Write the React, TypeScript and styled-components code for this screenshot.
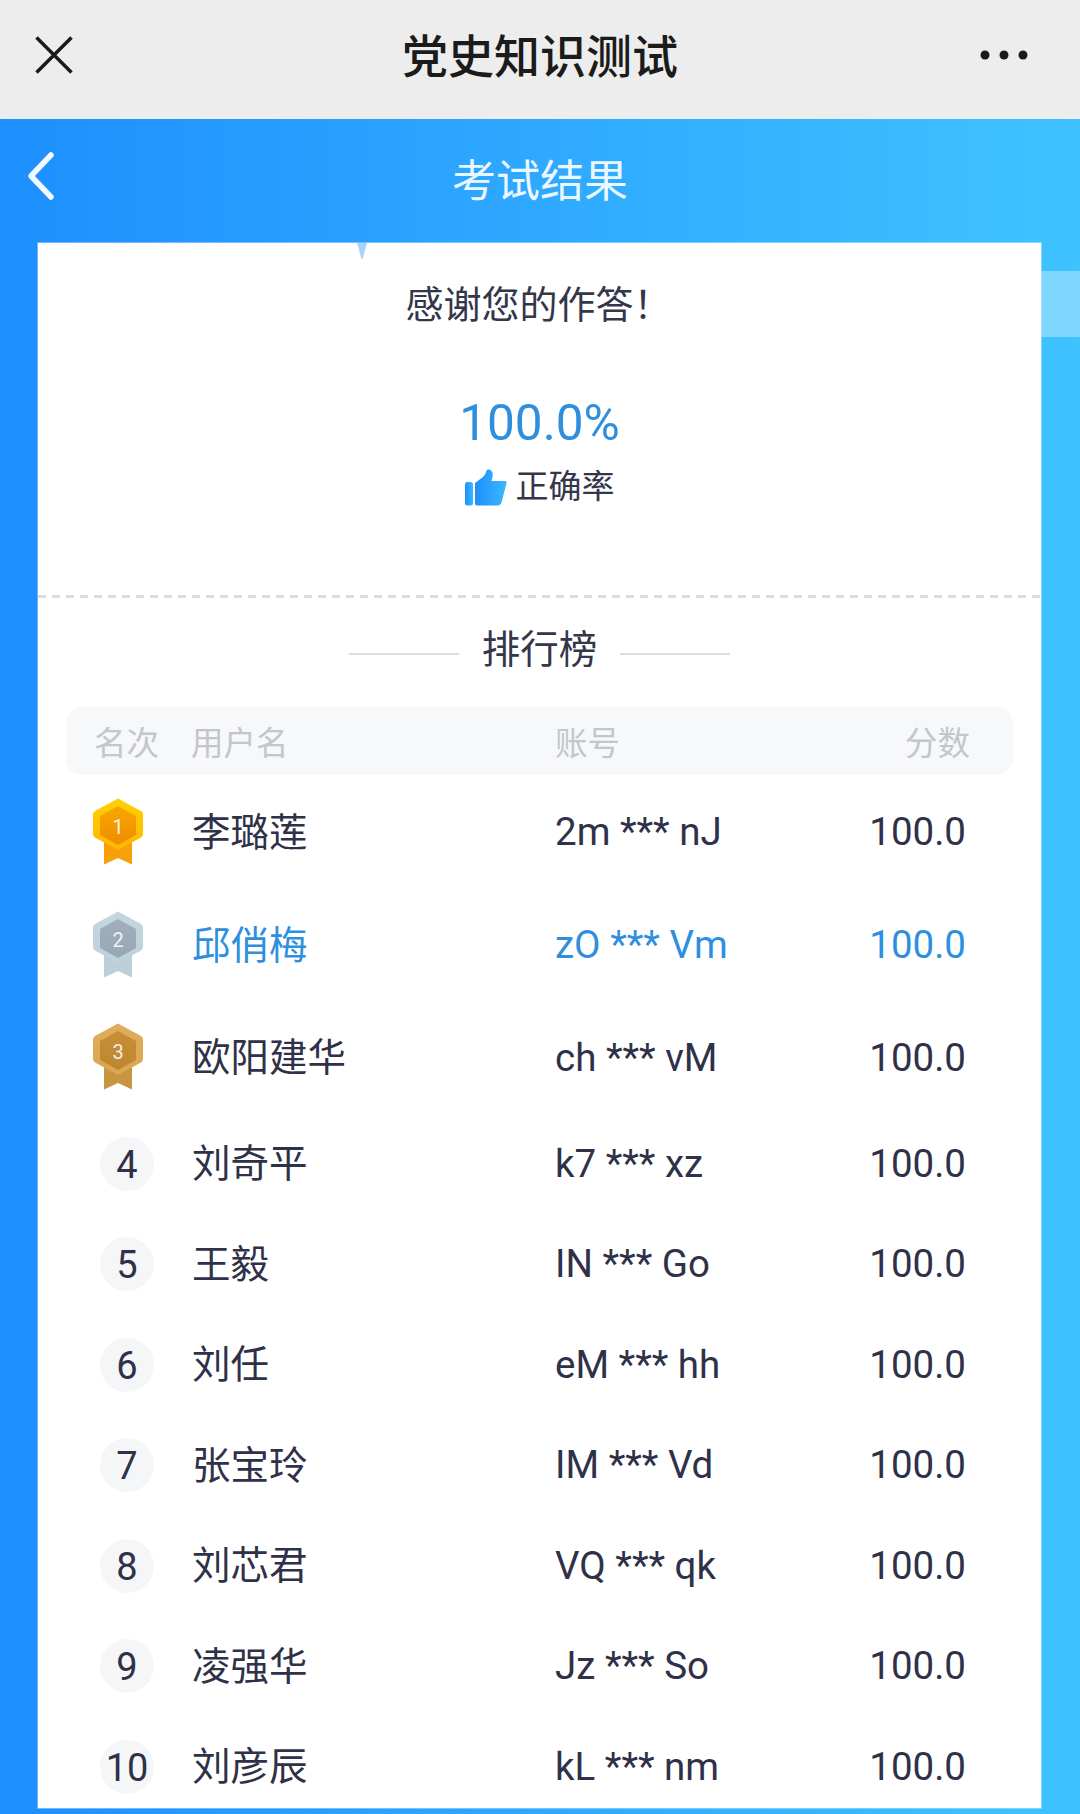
import React from "react";
import styled, { createGlobalStyle } from "styled-components";

const Global = createGlobalStyle`
  html, body { margin: 0; padding: 0; background: #fff; }
  body { font-family: Roboto, "Noto Sans CJK SC", sans-serif; }
  * { box-sizing: border-box; }
`;

const Page = styled.div`
  width: 1080px;
  height: 1814px;
  overflow: hidden;
  display: flex;
  flex-direction: column;
`;

const TopBar = styled.header`
  height: 119px;
  flex: none;
  background: #ededed;
  display: flex;
  align-items: center;
  justify-content: space-between;
  padding: 0 52px 9px 35px;
  position: relative;
`;

const TopTitle = styled.h1`
  position: absolute;
  left: 0;
  right: 0;
  top: 25px;
  margin: 0;
  text-align: center;
  font-size: 46px;
  line-height: 64px;
  font-weight: 500;
  color: #1b1b1b;
`;

const Stage = styled.main`
  flex: 1;
  position: relative;
  background: linear-gradient(90deg, #1e8fff 0%, #3fc3ff 100%);
  display: flex;
  flex-direction: column;
`;

const NavBar = styled.div`
  height: 124px;
  flex: none;
  position: relative;
  display: flex;
  align-items: center;
  justify-content: center;
  padding-top: 2px;
`;

const NavTitle = styled.h2`
  margin: 0;
  font-size: 44px;
  line-height: 60px;
  font-weight: 400;
  color: #eaf7ff;
`;

const BackIcon = styled.svg`
  position: absolute;
  left: 26px;
  top: 32px;
`;

const SideGlow = styled.div`
  position: absolute;
  right: 0;
  top: 152px;
  width: 39px;
  height: 66px;
  background: #7fd6ff;
`;

const Notch = styled.svg`
  position: absolute;
  left: 357px;
  top: 124px;
  z-index: 1;
`;

const Card = styled.section`
  position: relative;
  width: 1003px;
  height: 1565px;
  margin-left: 38px;
  background: #fff;
  overflow: hidden;
  box-shadow: 0 0 0 1px rgba(255, 255, 255, 0.35);
`;

const Summary = styled.div`
  height: 355px;
  padding-top: 32px;
  display: flex;
  flex-direction: column;
  align-items: center;
  position: relative;
  &::after {
    content: "";
    position: absolute;
    left: 0;
    right: 0;
    bottom: 0;
    height: 3px;
    background: repeating-linear-gradient(90deg, #dcdcdc 0 8px, transparent 8px 14px);
  }
`;

const Thanks = styled.p`
  margin: 0 0 0 -2px;
  font-size: 38px;
  line-height: 60px;
  color: #34364a;
`;

const Percent = styled.div`
  margin-top: 58px;
  font-size: 49.5px;
  line-height: 60px;
  color: #2e8fdf;
`;

const RateRow = styled.div`
  margin-top: 1px;
  height: 60px;
  display: flex;
  align-items: center;
  gap: 9px;
  font-size: 33px;
  color: #34364a;
`;

const ThumbIcon = styled.svg`
  margin-top: 6px;
`;

const BoardTitle = styled.div`
  margin-top: 23px;
  height: 60px;
  display: flex;
  align-items: center;
  justify-content: center;
  gap: 23px;
  font-size: 38.5px;
  color: #34364a;
  line-height: 50px;
  & > span {
    margin-top: -2px;
  }
  &::before, &::after {
    content: "";
    width: 110px;
    height: 2px;
    margin-top: 5px;
    background: #dcdde0;
  }
`;

const Board = styled.div`
  margin: 26px 28px 0;
`;

const HeadRow = styled.div`
  height: 68px;
  background: #f7f8fa;
  border-radius: 16px;
  display: grid;
  grid-template-columns: 97px 364px 1fr auto;
  align-items: center;
  padding: 0 43px 2px 28px;
  font-size: 32.5px;
  color: #c3c6cb;
`;

const List = styled.ol`
  list-style: none;
  margin: -3px 0 0;
  padding: 0;
`;

const Row = styled.li<{ $h: number; $active?: boolean }>`
  height: ${(p) => p.$h}px;
  display: grid;
  grid-template-columns: 127px 362px 1fr auto;
  align-items: center;
  padding-right: 47px;
  font-size: 38px;
  color: ${(p) => (p.$active ? "#2e8fdf" : "#2f3148")};
`;

const RankCell = styled.div`
  display: flex;
  align-items: center;
`;

const NameCell = styled.span`
  margin-left: -1px;
  font-size: 38.5px;
`;

const DataCell = styled.span`
  font-size: 38.5px;
  margin-top: 6px;
`;

const MedalIcon = styled.svg`
  margin-left: 27px;
  margin-top: 5px;
`;

const RankCircle = styled.span`
  width: 54px;
  height: 54px;
  margin-left: 34px;
  margin-top: 7px;
  padding-top: 2px;
  border-radius: 50%;
  background: #f5f6f8;
  display: flex;
  align-items: center;
  justify-content: center;
  color: #2f3148;
`;

const medalPalette = [
  { outer: "#ffd000", outer2: "#ffb800", inner: "#f9a800", inner2: "#ef8c00", ribbon: "#f7a008" },
  { outer: "#c3d6de", outer2: "#bfd2db", inner: "#a0afbb", inner2: "#97a7b3", ribbon: "#bccfd8" },
  { outer: "#e0ad5c", outer2: "#dba652", inner: "#c58f38", inner2: "#bd872f", ribbon: "#c8963f" },
];

function Medal({ rank }: { rank: number }) {
  const c = medalPalette[rank - 1];
  const id = `medal-${rank}`;
  return (
    <MedalIcon width="50" height="67" viewBox="0 0 50 67">
      <defs>
        <linearGradient id={`${id}-o`} x1="0" y1="0" x2="0" y2="1">
          <stop offset="0" stopColor={c.outer} />
          <stop offset="1" stopColor={c.outer2} />
        </linearGradient>
        <linearGradient id={`${id}-i`} x1="0" y1="0" x2="0" y2="1">
          <stop offset="0" stopColor={c.inner} />
          <stop offset="1" stopColor={c.inner2} />
        </linearGradient>
      </defs>
      <path d="M11 38 V66.5 L25 60 L39 66.5 V38 Z" fill={c.ribbon} />
      <path
        d="M25 0.5 L48 13 Q50 14 50 16.5 V36 Q50 38.5 48 39.5 L25 52 L2 39.5 Q0 38.5 0 36 V16.5 Q0 14 2 13 Z"
        fill={`url(#${id}-o)`}
      />
      <path d="M25 8 L43 18 V37 L25 47 L7 37 V18 Z" fill={`url(#${id}-i)`} />
      <text
        x="25"
        y="35.5"
        textAnchor="middle"
        fontSize="20"
        fontFamily="Roboto, sans-serif"
        fill="#fff"
        fillOpacity="0.88"
      >
        {rank}
      </text>
    </MedalIcon>
  );
}

type Entry = { name: string; account: string };

const entries: Entry[] = [
  { name: "李璐莲", account: "2m *** nJ" },
  { name: "邱俏梅", account: "zO *** Vm" },
  { name: "欧阳建华", account: "ch *** vM" },
  { name: "刘奇平", account: "k7 *** xz" },
  { name: "王毅", account: "IN *** Go" },
  { name: "刘任", account: "eM *** hh" },
  { name: "张宝玲", account: "IM *** Vd" },
  { name: "刘芯君", account: "VQ *** qk" },
  { name: "凌强华", account: "Jz *** So" },
  { name: "刘彦辰", account: "kL *** nm" },
];

const rowHeight = (i: number) => (i < 2 ? 113 : i === 2 ? 112 : 100.5);

export default function App() {
  return (
    <Page>
      <Global />
      <TopBar>
        <svg width="38" height="38" viewBox="0 0 38 38" fill="none" stroke="#1a1a1a" strokeWidth="3.5">
          <path d="M1.5 1.5 L36.5 36.5 M36.5 1.5 L1.5 36.5" />
        </svg>
        <TopTitle>党史知识测试</TopTitle>
        <svg width="48" height="10" viewBox="0 0 48 10" fill="#1a1a1a">
          <circle cx="5" cy="5" r="4.5" />
          <circle cx="24" cy="5" r="4.5" />
          <circle cx="43" cy="5" r="4.5" />
        </svg>
      </TopBar>
      <Stage>
        <SideGlow />
        <NavBar>
          <BackIcon width="30" height="50" viewBox="0 0 30 50" fill="none" stroke="#f1faff" strokeWidth="5.5" strokeLinecap="round" strokeLinejoin="round">
            <path d="M25 4 L5 25 L25 46" />
          </BackIcon>
          <NavTitle>考试结果</NavTitle>
        </NavBar>
        <Notch width="10" height="16" viewBox="0 0 10 16">
          <path d="M0 0 H10 L5.5 16 H4.5 Z" fill="#a8d4fb" />
        </Notch>
        <Card>
          <Summary>
            <Thanks>感谢您的作答！</Thanks>
            <Percent>100.0%</Percent>
            <RateRow>
              <ThumbIcon width="42" height="37" viewBox="0 0 42 37">
                <defs>
                  <linearGradient id="thumb" x1="0" y1="0" x2="1" y2="0">
                    <stop offset="0" stopColor="#1f8fff" />
                    <stop offset="1" stopColor="#3bb8ff" />
                  </linearGradient>
                </defs>
                <rect x="0" y="13" width="8" height="23.5" rx="2.5" fill="url(#thumb)" />
                <path
                  d="M10 14 L18 8 Q21 5 21.5 1.5 Q22 0 24 0.5 Q29 2 27.5 8 L26.5 12 H40 Q42 12 41.6 14 L36.5 33.5 Q35.5 36.5 32.5 36.5 H12 Q10 36.5 10 34.5 Z"
                  fill="url(#thumb)"
                />
              </ThumbIcon>
              正确率
            </RateRow>
          </Summary>
          <BoardTitle><span>排行榜</span></BoardTitle>
          <Board>
            <HeadRow>
              <span>名次</span>
              <span>用户名</span>
              <span>账号</span>
              <span>分数</span>
            </HeadRow>
            <List>
              {entries.map((e, i) => (
                <Row key={e.account} $h={rowHeight(i)} $active={i === 1}>
                  <RankCell>
                    {i < 3 ? <Medal rank={i + 1} /> : <RankCircle>{i + 1}</RankCircle>}
                  </RankCell>
                  <NameCell>{e.name}</NameCell>
                  <DataCell>{e.account}</DataCell>
                  <DataCell>100.0</DataCell>
                </Row>
              ))}
            </List>
          </Board>
        </Card>
      </Stage>
    </Page>
  );
}
